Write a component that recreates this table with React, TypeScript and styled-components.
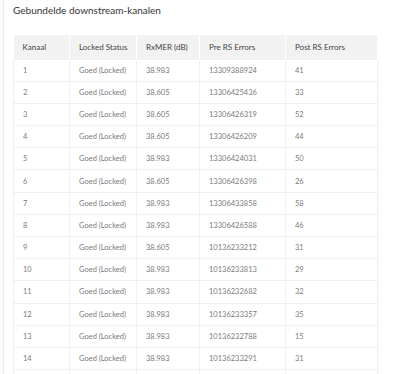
import React from "react";
import styled, { createGlobalStyle } from "styled-components";

const Global = createGlobalStyle`
  html, body { margin: 0; padding: 0; background: #fff; }
  body { font-family: Lato, "Open Sans", sans-serif; }
`;

const Card = styled.div`
  margin-left: 3px;
  width: 382px;
  height: 374px;
  overflow: hidden;
  border-left: 1px solid #ececec;
  border-right: 1px solid #ececec;
  padding: 4px 9px 0 9px;
  box-sizing: content-box;
`;

const Title = styled.h2`
  margin: 0;
  font-size: 10px;
  font-weight: 400;
  color: #333;
  line-height: 13px;
`;

const Table = styled.table`
  margin-top: 18px;
  width: 364px;
  border-collapse: collapse;
  table-layout: fixed;
`;

const HeadCell = styled.th<{ $w: number }>`
  width: ${(p) => p.$w}px;
  height: 24px;
  padding: 0 0 0 9px;
  background: #f2f2f2;
  text-align: left;
  font-weight: 400;
  font-size: 8px;
  color: #444;
  border-right: 1px solid #ffffff;
  box-sizing: border-box;
`;

const Row = styled.tr`
  height: 22.2px;
`;

const Cell = styled.td`
  padding: 0 0 0 9px;
  font-size: 7.5px;
  color: #7a7a7a;
  border: 1px solid #efefef;
  box-sizing: border-box;
`;

const cols = [
  { label: "Kanaal", w: 56 },
  { label: "Locked Status", w: 67 },
  { label: "RxMER (dB)", w: 63 },
  { label: "Pre RS Errors", w: 86 },
  { label: "Post RS Errors", w: 92 },
];

const rows: [string, string, string, string][] = [
  ["1", "38.983", "13309388924", "41"],
  ["2", "38.605", "13306425436", "33"],
  ["3", "38.605", "13306426319", "52"],
  ["4", "38.605", "13306426209", "44"],
  ["5", "38.983", "13306424031", "50"],
  ["6", "38.605", "13306426398", "26"],
  ["7", "38.983", "13306433858", "58"],
  ["8", "38.983", "13306426588", "46"],
  ["9", "38.605", "10136233212", "31"],
  ["10", "38.983", "10136233813", "29"],
  ["11", "38.983", "10136232682", "32"],
  ["12", "38.983", "10136233357", "35"],
  ["13", "38.983", "10136232788", "15"],
  ["14", "38.983", "10136233291", "31"],
];

export default function App() {
  return (
    <>
      <Global />
      <Card>
        <Title>Gebundelde downstream-kanalen</Title>
        <Table>
          <thead>
            <tr>
              {cols.map((c) => (
                <HeadCell key={c.label} $w={c.w}>
                  {c.label}
                </HeadCell>
              ))}
            </tr>
          </thead>
          <tbody>
            {rows.map((r) => (
              <Row key={r[0]}>
                <Cell>{r[0]}</Cell>
                <Cell>Goed (Locked)</Cell>
                <Cell>{r[1]}</Cell>
                <Cell>{r[2]}</Cell>
                <Cell>{r[3]}</Cell>
              </Row>
            ))}
            <Row>
              <Cell />
              <Cell />
              <Cell />
              <Cell />
              <Cell />
            </Row>
          </tbody>
        </Table>
      </Card>
    </>
  );
}
